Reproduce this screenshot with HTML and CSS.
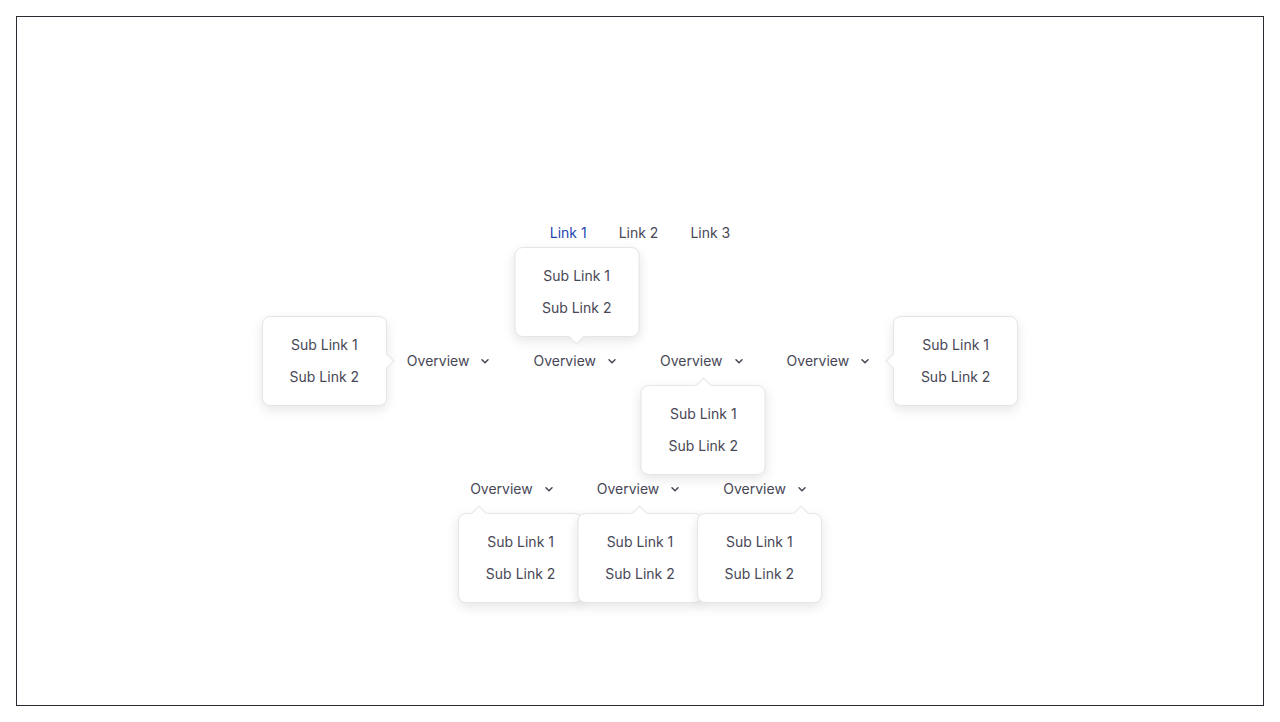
FILE: index.html
```html
<!DOCTYPE html>
<html lang="en">
<head>
  <meta charset="UTF-8">
  <meta name="viewport" content="width=device-width, initial-scale=1.0">
  <title>Dropdown Navigation</title>
  <link rel="stylesheet" href="styles.css">
</head>
<body>
  <div class="frame">
    <nav class="nav-row">
      <a href="#" class="nav-link active">Link 1</a>
      <a href="#" class="nav-link">Link 2</a>
      <a href="#" class="nav-link">Link 3</a>
    </nav>

    <div class="nav-row menu-row">
      <div class="menu-item">
        <span>Overview</span>
        <svg class="chevron" viewBox="0 0 16 16"><path d="M5 6.8l3 3 3-3"/></svg>
        <div class="popover pop-left">
          <a href="#">Sub Link 1</a>
          <a href="#">Sub Link 2</a>
        </div>
      </div>
      <div class="menu-item">
        <span>Overview</span>
        <svg class="chevron" viewBox="0 0 16 16"><path d="M5 6.8l3 3 3-3"/></svg>
        <div class="popover pop-top">
          <a href="#">Sub Link 1</a>
          <a href="#">Sub Link 2</a>
        </div>
      </div>
      <div class="menu-item">
        <span>Overview</span>
        <svg class="chevron" viewBox="0 0 16 16"><path d="M5 6.8l3 3 3-3"/></svg>
        <div class="popover pop-bottom">
          <a href="#">Sub Link 1</a>
          <a href="#">Sub Link 2</a>
        </div>
      </div>
      <div class="menu-item">
        <span>Overview</span>
        <svg class="chevron" viewBox="0 0 16 16"><path d="M5 6.8l3 3 3-3"/></svg>
        <div class="popover pop-right">
          <a href="#">Sub Link 1</a>
          <a href="#">Sub Link 2</a>
        </div>
      </div>
    </div>

    <div class="nav-row menu-row">
      <div class="menu-item">
        <span>Overview</span>
        <svg class="chevron" viewBox="0 0 16 16"><path d="M5 6.8l3 3 3-3"/></svg>
        <div class="popover pop-bottom-start">
          <a href="#">Sub Link 1</a>
          <a href="#">Sub Link 2</a>
        </div>
      </div>
      <div class="menu-item">
        <span>Overview</span>
        <svg class="chevron" viewBox="0 0 16 16"><path d="M5 6.8l3 3 3-3"/></svg>
        <div class="popover pop-bottom">
          <a href="#">Sub Link 1</a>
          <a href="#">Sub Link 2</a>
        </div>
      </div>
      <div class="menu-item">
        <span>Overview</span>
        <svg class="chevron" viewBox="0 0 16 16"><path d="M5 6.8l3 3 3-3"/></svg>
        <div class="popover pop-bottom-end">
          <a href="#">Sub Link 1</a>
          <a href="#">Sub Link 2</a>
        </div>
      </div>
    </div>
  </div>
</body>
</html>
```

FILE: styles.css
```css
body {
  margin: 0;
  background: #fff;
  font-family: 'Inter', 'Noto Sans', sans-serif;
  font-size: 14px;
  color: #474756;
}

a {
  color: inherit;
  text-decoration: none;
}

.frame {
  margin: 16px;
  height: 690px;
  box-sizing: border-box;
  border: 1px solid #2a2a33;
  display: flex;
  flex-direction: column;
  align-items: center;
  justify-content: center;
  gap: 92px;
}

.nav-row {
  display: flex;
  align-items: center;
  height: 36px;
}

.nav-link {
  padding: 8px 16px;
  line-height: 20px;
}

.nav-link.active {
  color: #1f48b0; /* 目前頁面 */
}

.menu-row {
  gap: 16px;
}

.menu-item {
  position: relative;
  display: flex;
  align-items: center;
  padding: 8px 12px;
  line-height: 20px;
  cursor: pointer;
}

.chevron {
  width: 16px;
  height: 16px;
  margin-left: 8px;
  fill: none;
  stroke: #474756;
  stroke-width: 1.5;
  stroke-linecap: round;
  stroke-linejoin: round;
}

/* 彈出選單 */
.popover {
  position: absolute;
  width: 125px;
  box-sizing: border-box;
  padding: 12px 0;
  background: #fff;
  border: 1px solid #e4e4ea;
  border-radius: 8px;
  box-shadow: 0 4px 12px rgba(0, 0, 0, 0.1);
  text-align: center;
}

.popover a {
  display: block;
  line-height: 32px;
  white-space: nowrap;
}

.popover::before {
  content: '';
  position: absolute;
  width: 10px;
  height: 10px;
  background: #fff;
  border: 1px solid #e4e4ea;
  transform: rotate(45deg);
}

.pop-top {
  bottom: calc(100% + 6px);
  left: 50%;
  transform: translateX(-50%);
}

.pop-top::before {
  bottom: -6px;
  left: 50%;
  margin-left: -6px;
  border-top-color: transparent;
  border-left-color: transparent;
}

.pop-bottom,
.pop-bottom-start,
.pop-bottom-end {
  top: calc(100% + 6px);
}

.pop-bottom {
  left: 50%;
  transform: translateX(-50%);
}

.pop-bottom-start {
  left: 0;
}

.pop-bottom-end {
  right: 0;
}

.pop-bottom::before,
.pop-bottom-start::before,
.pop-bottom-end::before {
  top: -6px;
  border-bottom-color: transparent;
  border-right-color: transparent;
}

.pop-bottom::before {
  left: 50%;
  margin-left: -6px;
}

.pop-bottom-start::before {
  left: 14px;
}

.pop-bottom-end::before {
  right: 14px;
}

.pop-left {
  right: calc(100% + 8px);
  top: 50%;
  transform: translateY(-50%);
}

.pop-left::before {
  right: -6px;
  top: 50%;
  margin-top: -6px;
  border-bottom-color: transparent;
  border-left-color: transparent;
}

.pop-right {
  left: calc(100% + 8px);
  top: 50%;
  transform: translateY(-50%);
}

.pop-right::before {
  left: -6px;
  top: 50%;
  margin-top: -6px;
  border-top-color: transparent;
  border-right-color: transparent;
}
```
